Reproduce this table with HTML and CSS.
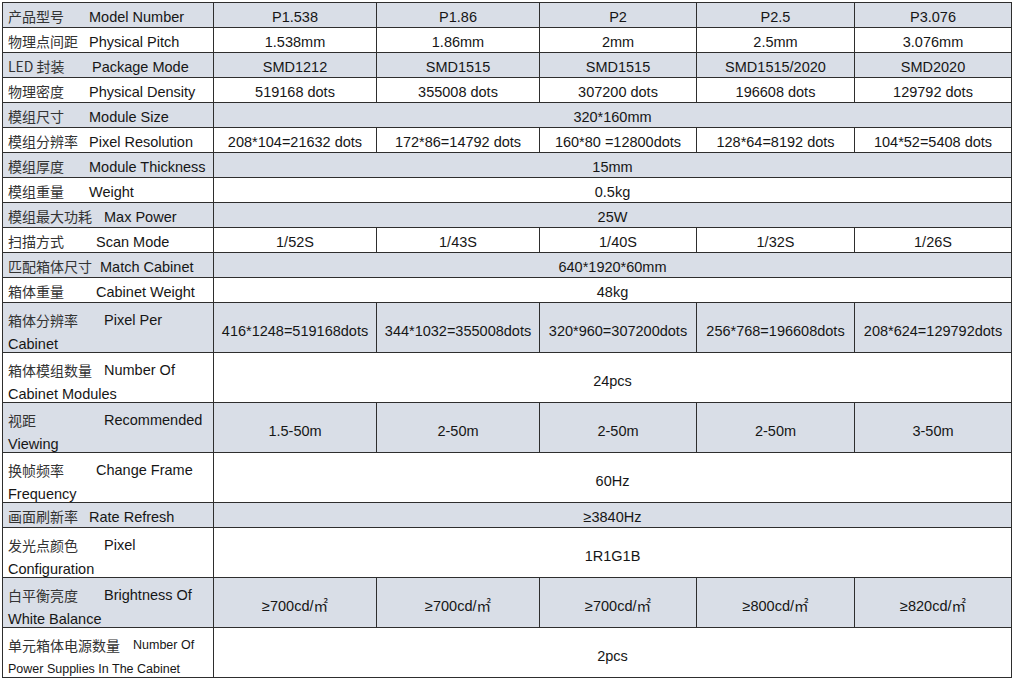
FILE: index.html
```html
<!DOCTYPE html>
<html lang="zh">
<head>
<meta charset="utf-8">
<title>Specifications</title>
<link rel="stylesheet" href="styles.css">
</head>
<body>
<table class="spec">
  <colgroup>
    <col class="c-label"><col class="c-a"><col class="c-a"><col class="c-b"><col class="c-c"><col class="c-b">
  </colgroup>
  <tbody>
    <tr class="g"><td class="lab"><span class="cn">产品型号</span><span class="en">Model Number</span></td><td>P1.538</td><td>P1.86</td><td>P2</td><td>P2.5</td><td>P3.076</td></tr>
    <tr><td class="lab"><span class="cn">物理点间距</span><span class="en">Physical Pitch</span></td><td>1.538mm</td><td>1.86mm</td><td>2mm</td><td>2.5mm</td><td>3.076mm</td></tr>
    <tr class="g"><td class="lab"><span class="cn">LED 封装</span><span class="en t91">Package Mode</span></td><td>SMD1212</td><td>SMD1515</td><td>SMD1515</td><td>SMD1515/2020</td><td>SMD2020</td></tr>
    <tr><td class="lab"><span class="cn">物理密度</span><span class="en">Physical Density</span></td><td>519168 dots</td><td>355008 dots</td><td>307200 dots</td><td>196608 dots</td><td>129792 dots</td></tr>
    <tr class="g"><td class="lab"><span class="cn">模组尺寸</span><span class="en">Module Size</span></td><td colspan="5">320*160mm</td></tr>
    <tr><td class="lab"><span class="cn">模组分辨率</span><span class="en">Pixel Resolution</span></td><td>208*104=21632 dots</td><td>172*86=14792 dots</td><td>160*80 =12800dots</td><td>128*64=8192 dots</td><td>104*52=5408 dots</td></tr>
    <tr class="g"><td class="lab"><span class="cn">模组厚度</span><span class="en">Module Thickness</span></td><td colspan="5">15mm</td></tr>
    <tr><td class="lab"><span class="cn">模组重量</span><span class="en">Weight</span></td><td colspan="5">0.5kg</td></tr>
    <tr class="g"><td class="lab"><span class="cn">模组最大功耗</span><span class="en t103">Max Power</span></td><td colspan="5">25W</td></tr>
    <tr><td class="lab"><span class="cn">扫描方式</span><span class="en t95">Scan Mode</span></td><td>1/52S</td><td>1/43S</td><td>1/40S</td><td>1/32S</td><td>1/26S</td></tr>
    <tr class="g"><td class="lab"><span class="cn">匹配箱体尺寸</span><span class="en t99">Match Cabinet</span></td><td colspan="5">640*1920*60mm</td></tr>
    <tr><td class="lab"><span class="cn">箱体重量</span><span class="en t95">Cabinet Weight</span></td><td colspan="5">48kg</td></tr>
    <tr class="g dbl"><td class="lab"><div class="ln"><span class="cn">箱体分辨率</span><span class="en t103">Pixel Per</span></div><div class="ln">Cabinet</div></td><td>416*1248=519168dots</td><td>344*1032=355008dots</td><td>320*960=307200dots</td><td>256*768=196608dots</td><td>208*624=129792dots</td></tr>
    <tr class="dbl"><td class="lab"><div class="ln"><span class="cn">箱体模组数量</span><span class="en t103">Number Of</span></div><div class="ln">Cabinet Modules</div></td><td colspan="5">24pcs</td></tr>
    <tr class="g dbl"><td class="lab"><div class="ln"><span class="cn">视距</span><span class="en t103">Recommended</span></div><div class="ln">Viewing</div></td><td>1.5-50m</td><td>2-50m</td><td>2-50m</td><td>2-50m</td><td>3-50m</td></tr>
    <tr class="dbl"><td class="lab"><div class="ln"><span class="cn">换帧频率</span><span class="en t95">Change Frame</span></div><div class="ln">Frequency</div></td><td colspan="5">60Hz</td></tr>
    <tr class="g"><td class="lab"><span class="cn">画面刷新率</span><span class="en">Rate Refresh</span></td><td colspan="5">≥3840Hz</td></tr>
    <tr class="dbl"><td class="lab"><div class="ln"><span class="cn">发光点颜色</span><span class="en t103">Pixel</span></div><div class="ln">Configuration</div></td><td colspan="5">1R1G1B</td></tr>
    <tr class="g dbl"><td class="lab"><div class="ln"><span class="cn">白平衡亮度</span><span class="en t103">Brightness Of</span></div><div class="ln">White Balance</div></td><td>≥700cd/㎡</td><td>≥700cd/㎡</td><td>≥700cd/㎡</td><td>≥800cd/㎡</td><td>≥820cd/㎡</td></tr>
    <tr class="dbl"><td class="lab small"><div class="ln"><span class="cn">单元箱体电源数量</span><span class="en t132">Number Of</span></div><div class="ln">Power Supplies In The Cabinet</div></td><td colspan="5">2pcs</td></tr>
  </tbody>
</table>
</body>
</html>
```

FILE: styles.css
```css
html, body {
  margin: 0;
  padding: 0;
  background: #ffffff;
}
body {
  padding: 2px 0 0 2px;
  font-family: "Liberation Sans", Arial, "Noto Sans CJK SC", sans-serif;
  font-size: 14.5px;
  color: #161616;
}
.spec {
  border-collapse: collapse;
  table-layout: fixed;
  width: 1009px;
}
.c-label { width: 211px; }
.c-a { width: 163px; }
.c-b { width: 157px; }
.c-c { width: 158px; }
.spec td {
  border: 1px solid #2e2e2e;
  height: 24px;
  padding: 3px 0 0 0;
  box-sizing: border-box;
  text-align: center;
  vertical-align: middle;
  line-height: 20px;
  white-space: nowrap;
  overflow: hidden;
}
.spec tr.dbl td { height: 49px; padding-top: 6px; }
.spec tr.g td { background: #d9dee7; }
.spec td.lab {
  text-align: left;
  padding-left: 5px;
  position: relative;
}
.ln {
  height: 24px;
  line-height: 22px;
  position: relative;
}
.ln + .ln { height: 19px; }
.cn {
  font-family: "Noto Sans CJK SC", sans-serif;
  font-size: 14px;
  color: #333;
}
.lab > .cn { display: inline-block; width: 81px; }
.lab > .en.t91 { margin-left: 3px; }
.lab > .en.t95 { margin-left: 7px; }
.lab > .en.t99 { margin-left: 11px; }
.lab > .en.t103 { margin-left: 15px; }
.ln .en { position: absolute; left: 81px; }
.ln .en.t95 { left: 88px; }
.ln .en.t103 { left: 96px; }
.ln .en.t132 { left: 125px; }
.small .ln { font-size: 12.5px; }
.small .ln .cn { font-size: 14px; }
```
